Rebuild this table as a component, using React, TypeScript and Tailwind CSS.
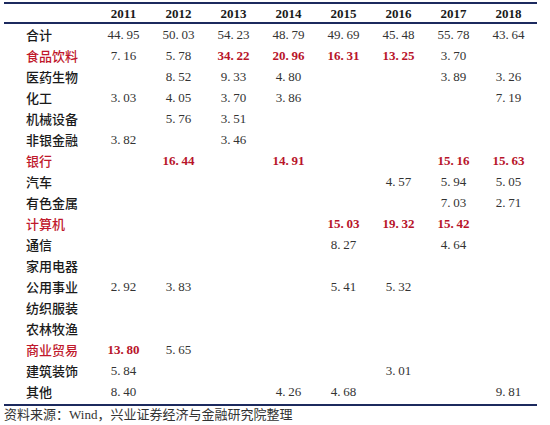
import React from 'react';

type Cell = { v: string; red?: boolean } | null;

type Row = {
  name: string;
  red?: boolean;
  cells: Cell[];
};

const years = ['2011', '2012', '2013', '2014', '2015', '2016', '2017', '2018'];

const n = (v: string): Cell => ({ v });
const r = (v: string): Cell => ({ v, red: true });
const _ = null;

const rows: Row[] = [
  { name: '合计', cells: [n('44.95'), n('50.03'), n('54.23'), n('48.79'), n('49.69'), n('45.48'), n('55.78'), n('43.64')] },
  { name: '食品饮料', red: true, cells: [n('7.16'), n('5.78'), r('34.22'), r('20.96'), r('16.31'), r('13.25'), n('3.70'), _] },
  { name: '医药生物', cells: [_, n('8.52'), n('9.33'), n('4.80'), _, _, n('3.89'), n('3.26')] },
  { name: '化工', cells: [n('3.03'), n('4.05'), n('3.70'), n('3.86'), _, _, _, n('7.19')] },
  { name: '机械设备', cells: [_, n('5.76'), n('3.51'), _, _, _, _, _] },
  { name: '非银金融', cells: [n('3.82'), _, n('3.46'), _, _, _, _, _] },
  { name: '银行', red: true, cells: [_, r('16.44'), _, r('14.91'), _, _, r('15.16'), r('15.63')] },
  { name: '汽车', cells: [_, _, _, _, _, n('4.57'), n('5.94'), n('5.05')] },
  { name: '有色金属', cells: [_, _, _, _, _, _, n('7.03'), n('2.71')] },
  { name: '计算机', red: true, cells: [_, _, _, _, r('15.03'), r('19.32'), r('15.42'), _] },
  { name: '通信', cells: [_, _, _, _, n('8.27'), _, n('4.64'), _] },
  { name: '家用电器', cells: [_, _, _, _, _, _, _, _] },
  { name: '公用事业', cells: [n('2.92'), n('3.83'), _, _, n('5.41'), n('5.32'), _, _] },
  { name: '纺织服装', cells: [_, _, _, _, _, _, _, _] },
  { name: '农林牧渔', cells: [_, _, _, _, _, _, _, _] },
  { name: '商业贸易', red: true, cells: [r('13.80'), n('5.65'), _, _, _, _, _, _] },
  { name: '建筑装饰', cells: [n('5.84'), _, _, _, _, n('3.01'), _, _] },
  { name: '其他', cells: [n('8.40'), _, _, n('4.26'), n('4.68'), _, _, n('9.81')] },
];

const cjk = { fontFamily: '"Noto Sans CJK SC", "Noto Sans", sans-serif' };
const num = { fontFamily: '"Liberation Serif", "Noto Sans CJK SC", serif' };

// the period in the source font is wide, so pad it a little
const fmt = (v: string) => v.replace('.', '.\u2009');

export default function App() {
  return (
    <div className="w-[550px] h-[425px] bg-white overflow-hidden">
      <div className="ml-[4px] w-[533px] pt-[2px]">
        <div className="h-[2px] bg-[#1c2a5e]" />
        <div className="grid grid-cols-[92px_repeat(8,55px)] h-[18px] items-center">
          <div />
          {years.map((y) => (
            <div key={y} className="text-center text-[13px] font-bold text-[#1a1a1a] leading-none" style={num}>
              {y}
            </div>
          ))}
        </div>
        <div className="h-[2px] bg-[#1c2a5e]" />
        {rows.map((row) => (
          <div key={row.name} className="grid grid-cols-[92px_repeat(8,55px)] h-[21px] items-center">
            <div
              className={`pl-[22px] text-[13px] font-medium leading-none ${row.red ? 'text-[#c0182c]' : 'text-[#1a1a1a]'}`}
              style={cjk}
            >
              {row.name}
            </div>
            {row.cells.map((c, i) => (
              <div
                key={i}
                className={`text-center text-[13px] leading-none ${c?.red ? 'text-[#b8142a] font-bold' : 'text-[#333]'}`}
                style={num}
              >
                {c ? fmt(c.v) : ''}
              </div>
            ))}
          </div>
        ))}
        <div className="mt-[2px] h-[2px] bg-[#1c2a5e]" />
      </div>
      <div className="pl-[4px] pt-[1px] text-[13px] leading-[14px] text-[#333]" style={cjk}>
        资料来源：<span style={num}>Wind</span>，兴业证券经济与金融研究院整理
      </div>
    </div>
  );
}
